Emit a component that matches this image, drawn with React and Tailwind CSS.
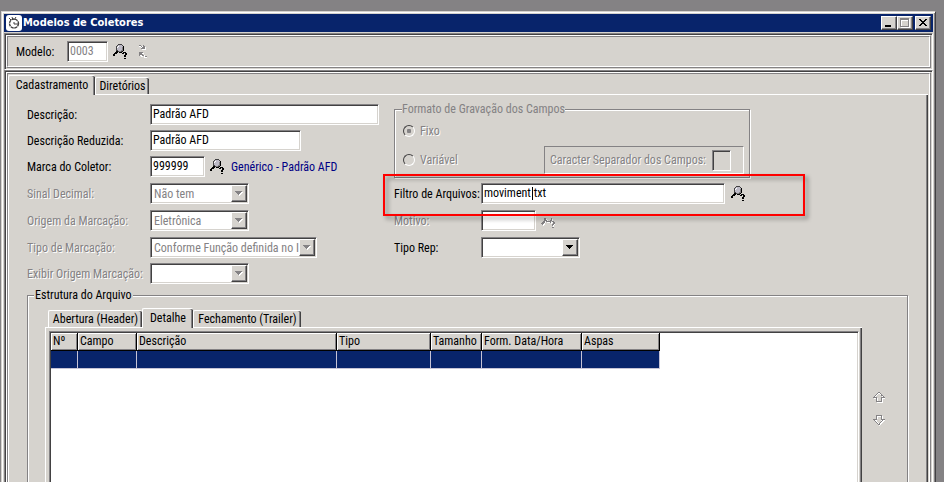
import React, { useState } from 'react';
import clsx from 'clsx';

const SUNKEN =
  'border border-t-[#848284] border-l-[#848284] border-b-white border-r-white shadow-[inset_1px_1px_0_#424142,inset_-1px_-1px_0_#d6d3ce]';
const RAISED =
  'bg-[#d6d3ce] border border-t-white border-l-white border-b-[#424142] border-r-[#424142] shadow-[inset_-1px_-1px_0_#848284]';
const ETCHED = 'border border-[#848284] shadow-[1px_1px_0_#fff,inset_1px_1px_0_#fff]';
const EMBOSSED = 'text-[#848284] [text-shadow:1px_1px_0_#fff]';

const PALETTE = {
  k: '#000000',
  d: '#424142',
  g: '#848284',
  l: '#bdbac6',
  w: '#ffffff',
};

const SEARCH = [
  '.....dddd.....',
  '....dlllld....',
  '...dlwllllk...',
  '...dwllllgk...',
  '...dlllllgk...',
  '...dlllllgk...',
  '...ddlllggk...',
  '...kkdggdk....',
  '..kkk.kkk.kkk.',
  '.kkk.....kk.kk',
  'kk..........kk',
  'kk.........kk.',
  '...........kk.',
  '..............',
  '...........kk.',
];

const SEARCH_DISABLED = [
  '..............',
  '..............',
  '..............',
  '..............',
  '...gg.....g...',
  '...ggw....gw..',
  '...gggw..ggw..',
  '..ggwggggg.gg.',
  '.gggw.wwwgwwgg',
  'gggw......w.gg',
  '.gww.......ggw',
  '..w........gw.',
  '............w.',
  '...........gg.',
];

const REFRESH_DISABLED = [
  'gg..g.....',
  'wwgwgg....',
  '..wgggw...',
  '..ggggw...',
  '...wwww...',
  '..........',
  '..........',
  'gggg......',
  'gggww.....',
  'gggg......',
  'gwwggw....',
  '..ww.wgg..',
  '.....www..',
];

const ARROW_UP = [
  '.....gg.....',
  '....gwwg....',
  '...gw..wg...',
  '..gw....gg..',
  '.gw......wg.',
  'gggg....gggg',
  '.wwgw...gwww',
  '...gw...gw..',
  '...gw...gw..',
  '...ggggggw..',
  '....wwwwww..',
];

const ARROW_DOWN = [
  '...gggggg...',
  '...gwwwwgw..',
  '...gw...gw..',
  '...gw...gw..',
  'gggg....gggg',
  '.gww....wgww',
  '..gw....gww.',
  '...gw..gww..',
  '....gwgww...',
  '.....ggw....',
  '......w.....',
];

const COLUMNS = [
  { label: 'Nº', width: 27 },
  { label: 'Campo', width: 59 },
  { label: 'Descrição', width: 200 },
  { label: 'Tipo', width: 94 },
  { label: 'Tamanho', width: 51 },
  { label: 'Form. Data/Hora', width: 100 },
  { label: 'Aspas', width: 78 },
];

const PixelIcon = ({ rows }) => (
  <svg width={rows[0].length} height={rows.length} shapeRendering="crispEdges" aria-hidden="true">
    {rows.map((row, y) =>
      [...row].map((c, x) =>
        PALETTE[c] ? <rect key={`${x}-${y}`} x={x} y={y} width="1" height="1" fill={PALETTE[c]} /> : null
      )
    )}
  </svg>
);

const IconButton = ({ rows, label, disabled, className }) => (
  <button type="button" aria-label={label} disabled={disabled} className={clsx('shrink-0', className)}>
    <PixelIcon rows={rows} />
  </button>
);

const Row = ({ id, label, disabled, labelClass = 'w-[123px]', children }) => (
  <div className="relative flex h-[21px] items-center">
    <label htmlFor={id} className={clsx('shrink-0 whitespace-nowrap', labelClass, disabled && EMBOSSED)}>
      {label}
    </label>
    {children}
  </div>
);

const TextBox = ({ id, value, disabled, className }) => {
  const [text, setText] = useState(value);
  return (
    <input
      id={id}
      type="text"
      value={text}
      disabled={disabled}
      onChange={(e) => setText(e.target.value)}
      className={clsx('h-[21px] px-[2px] pb-[2px] outline-none', SUNKEN, className)}
    />
  );
};

const Select = ({ id, value, disabled, className }) => (
  <div className={clsx('relative h-[21px] bg-white p-px', SUNKEN, className)}>
    <select
      id={id}
      disabled={disabled}
      className={clsx(
        'block h-full w-full appearance-none overflow-hidden pl-[2px] pr-4 outline-none disabled:opacity-100',
        disabled && 'text-[#848284]'
      )}
    >
      <option>{value}</option>
    </select>
    <span className={clsx('pointer-events-none absolute inset-y-px right-px flex w-4 items-center justify-center', RAISED)}>
      <svg width="8" height="5" shapeRendering="crispEdges" aria-hidden="true">
        {disabled && <path d="M1 1h7v1h-1v1h-1v1h-1v1h-1v-1h-1v-1h-1v-1h-1z" fill="#fff" />}
        <path d="M0 0h7v1h-1v1h-1v1h-1v1h-1v-1h-1v-1h-1v-1h-1z" fill={disabled ? '#848284' : '#000'} />
      </svg>
    </span>
  </div>
);

const Tab = ({ selected, className, children }) => (
  <button
    type="button"
    role="tab"
    aria-selected={selected}
    className={clsx(
      'relative whitespace-nowrap rounded-t-[2px] border-l border-t border-white bg-[#d6d3ce] text-center',
      'shadow-[inset_-1px_0_0_#424142,inset_-2px_0_0_#848284]',
      selected ? 'z-10 -mb-px h-5 pb-[2px]' : 'h-[17px]',
      className
    )}
  >
    {children}
  </button>
);

const Radio = ({ label, checked }) => (
  <label className={clsx('flex h-[13px] items-center gap-[5px]', EMBOSSED)}>
    <input
      type="radio"
      name="formato"
      disabled
      defaultChecked={checked}
      className="size-3 appearance-none rounded-full border border-b-white border-l-[#424142] border-r-white border-t-[#424142] bg-[#d6d3ce] checked:bg-[radial-gradient(circle,#848284_2px,transparent_2.5px)]"
    />
    {label}
  </label>
);

// double edge used round the toolbar and the main area
const Frame = ({ className, innerClass, children }) => (
  <div className={clsx('p-px', SUNKEN, className)}>
    <div className="flex h-full flex-col border border-b-[#848284] border-l-white border-r-[#848284] border-t-white">
      <div
        className={clsx(
          'min-h-0 flex-1 border border-b-white border-l-[#848284] border-r-white border-t-[#848284]',
          innerClass
        )}
      >
        {children}
      </div>
    </div>
  </div>
);

const TitleBar = () => (
  <div className="mb-px flex h-[18px] shrink-0 items-center bg-[#08246b] px-[2px] text-white">
    <svg width="16" height="16" viewBox="0 0 16 16" aria-hidden="true">
      <rect width="16" height="16" rx="3" fill="#fff" />
      <circle cx="8" cy="8.5" r="4.5" fill="none" stroke="#424142" strokeWidth="1.4" strokeDasharray="3 0.6" />
      <path d="M8 9h4M8 9v-2M3 3l2 2M6 2l1 3M10 2L8 5" fill="none" stroke="#424142" strokeWidth="1" />
    </svg>
    <h1 className="ml-px flex-1 font-['DejaVu_Sans_Condensed','DejaVu_Sans',sans-serif] text-[11px] font-bold">
      Modelos de Coletores
    </h1>
    <button type="button" aria-label="Minimizar" className={clsx('h-[14px] w-4', RAISED)}>
      <svg width="14" height="12" shapeRendering="crispEdges" aria-hidden="true">
        <path d="M3 8h6v2H3z" />
      </svg>
    </button>
    <button type="button" aria-label="Maximizar" disabled className={clsx('h-[14px] w-4', RAISED)}>
      <svg width="14" height="12" shapeRendering="crispEdges" fill="none" aria-hidden="true">
        <path d="M3.5 2.5h8v8h-8zM3.5 3.5h8" stroke="#fff" />
        <path d="M2.5 1.5h8v8h-8zM2.5 2.5h8" stroke="#848284" />
      </svg>
    </button>
    <button type="button" aria-label="Fechar" className={clsx('ml-[2px] h-[14px] w-4', RAISED)}>
      <svg width="14" height="12" shapeRendering="crispEdges" aria-hidden="true">
        <path d="M3 2h2v1h1v1h2v-1h1v-1h2v1h-1v1h-1v1h-1v1h1v1h1v1h1v1h-2v-1h-1v-1h-2v1h-1v1h-2v-1h1v-1h1v-1h1v-1h-1v-1h-1v-1h-1z" />
      </svg>
    </button>
  </div>
);

const FormatoGravacao = () => (
  <fieldset disabled className={clsx('mb-[5px] h-[75px] w-[356px] px-2', ETCHED)}>
    <legend className="-ml-px bg-[#d6d3ce] leading-[13px] text-[#848284]">Formato de Gravação dos Campos</legend>
    <div className="flex justify-between pt-2">
      <div className="flex flex-col gap-4">
        <Radio label="Fixo" checked />
        <Radio label="Variável" />
      </div>
      <div className="-mr-[3px] mt-[22px] flex h-7 w-[200px] items-center justify-between border border-b-white border-l-[#848284] border-r-white border-t-[#848284] pl-[5px] pr-3">
        <label htmlFor="separador" className={EMBOSSED}>
          Caracter Separador dos Campos:
        </label>
        <TextBox id="separador" value="" disabled className="w-[19px]" />
      </div>
    </div>
  </fieldset>
);

const GridCampos = () => (
  <div className={clsx('h-full overflow-hidden bg-white p-px', SUNKEN)}>
    <table className="table-fixed border-separate border-spacing-0">
      <colgroup>
        {COLUMNS.map((col) => (
          <col key={col.label} style={{ width: col.width }} />
        ))}
      </colgroup>
      <thead>
        <tr>
          {COLUMNS.map((col) => (
            <th
              key={col.label}
              className="h-[18px] overflow-hidden whitespace-nowrap border-b border-r border-black bg-[#d6d3ce] p-0 pl-[2px] text-left font-normal leading-[17px] shadow-[inset_1px_1px_0_#fff,inset_-1px_-1px_0_#848284]"
            >
              {col.label}
            </th>
          ))}
        </tr>
      </thead>
      <tbody>
        <tr>
          {COLUMNS.map((col) => (
            <td key={col.label} className="h-[18px] border-b border-r border-[#c6c3d6] bg-[#08246b] p-0" />
          ))}
        </tr>
      </tbody>
    </table>
  </div>
);

const EstruturaArquivo = () => (
  <fieldset className={clsx('mt-[5px] flex min-h-0 flex-1 flex-col pl-[17px]', ETCHED)}>
    <legend className="-ml-[11px] bg-[#d6d3ce] px-px leading-[13px]">Estrutura do Arquivo</legend>
    <div className="flex min-h-0 flex-1 pt-[6px]">
      <div className="flex min-w-0 flex-1 flex-col">
        <div role="tablist" className="flex items-end pl-[3px]">
          <Tab className="w-[94px]">Abertura (Header)</Tab>
          <Tab selected className="w-[51px]">Detalhe</Tab>
          <Tab className="w-[108px]">Fechamento (Trailer)</Tab>
        </div>
        <div className="min-h-0 flex-1 border-l border-t border-white pl-[3px] pr-[3px] pt-[3px] shadow-[inset_-1px_0_0_#424142,inset_-2px_0_0_#848284]">
          <GridCampos />
        </div>
      </div>
      <div className="flex w-[45px] flex-col items-start gap-3 pl-[11px] pt-[84px]">
        <IconButton rows={ARROW_UP} label="Mover para cima" disabled />
        <IconButton rows={ARROW_DOWN} label="Mover para baixo" disabled />
      </div>
    </div>
  </fieldset>
);

export default function App() {
  return (
    <div className="h-screen overflow-hidden bg-[#848284] pl-px pr-2 pt-[11px] font-['Roboto_Condensed','Roboto',sans-serif] text-[12px] leading-[14px] text-black">
      {/* the window runs past the bottom of the screen */}
      <div className="flex h-[110%] flex-col border border-b-0 border-l-[#d6d3ce] border-r-[#424142] border-t-[#d6d3ce] bg-[#d6d3ce] p-[2px] pb-0 shadow-[inset_1px_1px_0_#fff,inset_-1px_0_0_#848284]">
        <TitleBar />

        <Frame className="h-[37px] shrink-0" innerClass="flex items-center pl-2">
          <label htmlFor="modelo" className="w-[51px]">Modelo:</label>
          <TextBox id="modelo" value="0003" disabled className="w-[41px] bg-white text-[#848284]" />
          <IconButton rows={SEARCH} label="Pesquisar modelo" className="ml-[5px]" />
          <IconButton rows={REFRESH_DISABLED} label="Atualizar" disabled className="ml-3" />
        </Frame>

        <Frame className="min-h-0 flex-1" innerClass="flex flex-col">
          <div role="tablist" className="flex h-5 shrink-0 items-end">
            <Tab selected className="w-[87px]">Cadastramento</Tab>
            <Tab className="w-[54px]">Diretórios</Tab>
          </div>
          <div className="mr-px flex min-h-0 flex-1 flex-col border-l border-t border-white pl-[18px] pr-5 pt-2 shadow-[inset_-1px_0_0_#424142,inset_-2px_0_0_#848284]">
            <div className="grid grid-cols-[367px_1fr]">
              <div className="flex flex-col gap-[6px] pt-px">
                <div className="flex flex-col gap-[5px]">
                  <Row id="descricao" label="Descrição:">
                    <TextBox id="descricao" value="Padrão AFD" className="w-[229px] bg-white" />
                  </Row>
                  <Row id="reduzida" label="Descrição Reduzida:">
                    <TextBox id="reduzida" value="Padrão AFD" className="w-[151px] bg-white" />
                  </Row>
                  <Row id="marca" label="Marca do Coletor:">
                    <TextBox id="marca" value="999999" className="w-[55px] bg-white" />
                    <IconButton rows={SEARCH} label="Pesquisar marca" className="ml-[5px]" />
                    <span className="ml-[7px] text-[#000084]">Genérico - Padrão AFD</span>
                  </Row>
                </div>
                <Row id="sinal" label="Sinal Decimal:" disabled>
                  <Select id="sinal" value="Não tem" disabled className="w-[99px]" />
                </Row>
                <Row id="origem" label="Origem da Marcação:" disabled>
                  <Select id="origem" value="Eletrônica" disabled className="w-[99px]" />
                </Row>
                <div className="flex flex-col gap-[5px]">
                  <Row id="tipo" label="Tipo de Marcação:" disabled>
                    <Select id="tipo" value="Conforme Função definida no I" disabled className="w-[167px]" />
                  </Row>
                  <Row id="exibir" label="Exibir Origem Marcação:" disabled>
                    <Select id="exibir" value="" disabled className="w-[99px]" />
                  </Row>
                </div>
              </div>

              <div>
                <FormatoGravacao />
                <div className="flex flex-col gap-[6px]">
                  <Row id="filtro" label="Filtro de Arquivos:" labelClass="w-[87px]">
                    <div className="relative">
                      <TextBox id="filtro" value="moviment txt" className="block w-[244px] bg-white" />
                      <span className="absolute left-[51px] top-[4px] h-[13px] w-px bg-black" />
                    </div>
                    <IconButton rows={SEARCH} label="Pesquisar filtro" className="ml-[6px]" />
                    <div className="pointer-events-none absolute -left-[11px] -top-[9px] z-10 h-[42px] w-[422px] border-2 border-[#ff0000] drop-shadow-[3px_3px_2px_rgba(0,0,0,0.4)]" />
                  </Row>
                  <Row id="motivo" label="Motivo:" labelClass="w-[87px]" disabled>
                    <TextBox id="motivo" value="" disabled className="w-[55px] bg-white" />
                    <IconButton rows={SEARCH_DISABLED} label="Pesquisar motivo" disabled className="ml-[5px]" />
                  </Row>
                  <Row id="rep" label="Tipo Rep:" labelClass="w-[87px]">
                    <Select id="rep" value="" className="w-[99px]" />
                  </Row>
                </div>
              </div>
            </div>

            <EstruturaArquivo />
          </div>
        </Frame>
      </div>
    </div>
  );
}
